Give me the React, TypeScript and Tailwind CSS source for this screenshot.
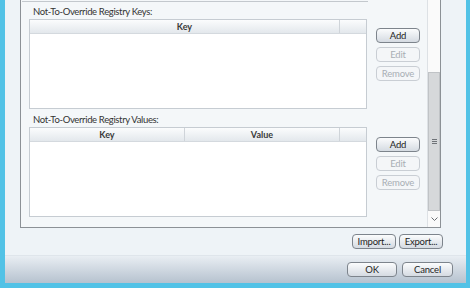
import React from "react";

const font = { fontFamily: 'Lato, "Open Sans", sans-serif' };

function Btn({ label, disabled = false, w = "w-[44px]" }: any) {
  return (
    <div
      className={`${w} h-[15px] flex items-center justify-center rounded-[4px] border text-[9.5px] tracking-[-0.2px] leading-none ${
        disabled
          ? "border-[#c9ced4] bg-[#f4f6f8] text-[#a8aeb4]"
          : "border-[#7d848c] bg-gradient-to-b from-[#fbfcfd] to-[#d5dbe2] text-[#1e1e1e]"
      }`}
    >
      {label}
    </div>
  );
}

function Header({ cols }: any) {
  return (
    <div className="flex h-[14px] bg-gradient-to-b from-[#fbfcfd] to-[#e3e8ec] border-b border-[#d4d9de] text-[9px] font-bold text-[#3a3a3a] leading-none">
      {cols.map((c: any, i: number) => (
        <div
          key={i}
          className={`${c.w} flex items-center justify-center border-r border-[#cfd4d9]`}
        >
          {c.label}
        </div>
      ))}
      <div className="flex-1" />
    </div>
  );
}

function Section({ title, cols, top }: any) {
  return (
    <div className="flex flex-col">
      <div className="pl-[12px] h-[13px] flex items-center text-[9.5px] tracking-[-0.35px] text-[#333] leading-none">
        {title}
      </div>
      <div className="flex mt-[1px] pl-[8px]">
        <div className="w-[338px] h-[90px] border border-[#c6ccd2] bg-white flex flex-col">
          <Header cols={cols} />
        </div>
        <div className={`ml-[9px] flex flex-col gap-[4px] ${top}`}>
          <Btn label="Add" />
          <Btn label="Edit" disabled />
          <Btn label="Remove" disabled />
        </div>
      </div>
    </div>
  );
}

export default function App() {
  return (
    <div
      className="w-[470px] h-[288px] bg-[#52c2e6] pl-[5px] pr-[4px] pb-[5px] overflow-hidden"
      style={font}
    >
      <div className="h-full bg-[#eef3f7] flex flex-col">
        <div className="pl-[15px] pr-[25px]">
          <div className="h-[228px] border-l border-b border-r border-[#8c9196] flex bg-[#f4f7f9]">
            <div className="flex-1 flex flex-col">
              <div className="ml-[1px] w-[346px] h-[2px] border-b border-[#c3c8cd]" />
              <div className="mt-[3px]">
                <Section
                  title="Not-To-Override Registry Keys:"
                  cols={[{ w: "w-[310px]", label: "Key" }]}
                  top="mt-[9px]"
                />
              </div>
              <div className="mt-[4px]">
                <Section
                  title="Not-To-Override Registry Values:"
                  cols={[
                    { w: "w-[155px]", label: "Key" },
                    { w: "w-[155px]", label: "Value" },
                  ]}
                  top="mt-[10px]"
                />
              </div>
            </div>
            <div className="w-[13px] border-l border-[#dde1e5] bg-[#fafafa] flex flex-col">
              <div className="h-[72px]" />
              <div className="flex-1 bg-[#d6d8da] border border-[#c0c3c6] flex items-center justify-center">
                <div className="flex flex-col gap-[1px]">
                  <div className="w-[5px] h-[1px] bg-[#6f7378]" />
                  <div className="w-[5px] h-[1px] bg-[#6f7378]" />
                  <div className="w-[5px] h-[1px] bg-[#6f7378]" />
                </div>
              </div>
              <div className="h-[16px] flex items-center justify-center">
                <svg width="7" height="5" viewBox="0 0 7 5">
                  <path d="M0.5 0.5 L3.5 3.5 L6.5 0.5" stroke="#6a6e73" fill="none" strokeWidth="1" />
                </svg>
              </div>
            </div>
          </div>
          <div className="flex justify-end gap-[3px] mt-[6px] -mr-[2px]">
            <Btn label="Import..." w="w-[44px]" />
            <Btn label="Export..." w="w-[44px]" />
          </div>
        </div>
        <div className="mt-[6px] flex-1 bg-gradient-to-b from-[#e9eef3] to-[#b6c2cf] border-t border-[#dfe5eb] flex justify-end items-center gap-[5px] pr-[13px]">
          <Btn label="OK" w="w-[50px]" />
          <Btn label="Cancel" w="w-[51px]" />
        </div>
      </div>
    </div>
  );
}
